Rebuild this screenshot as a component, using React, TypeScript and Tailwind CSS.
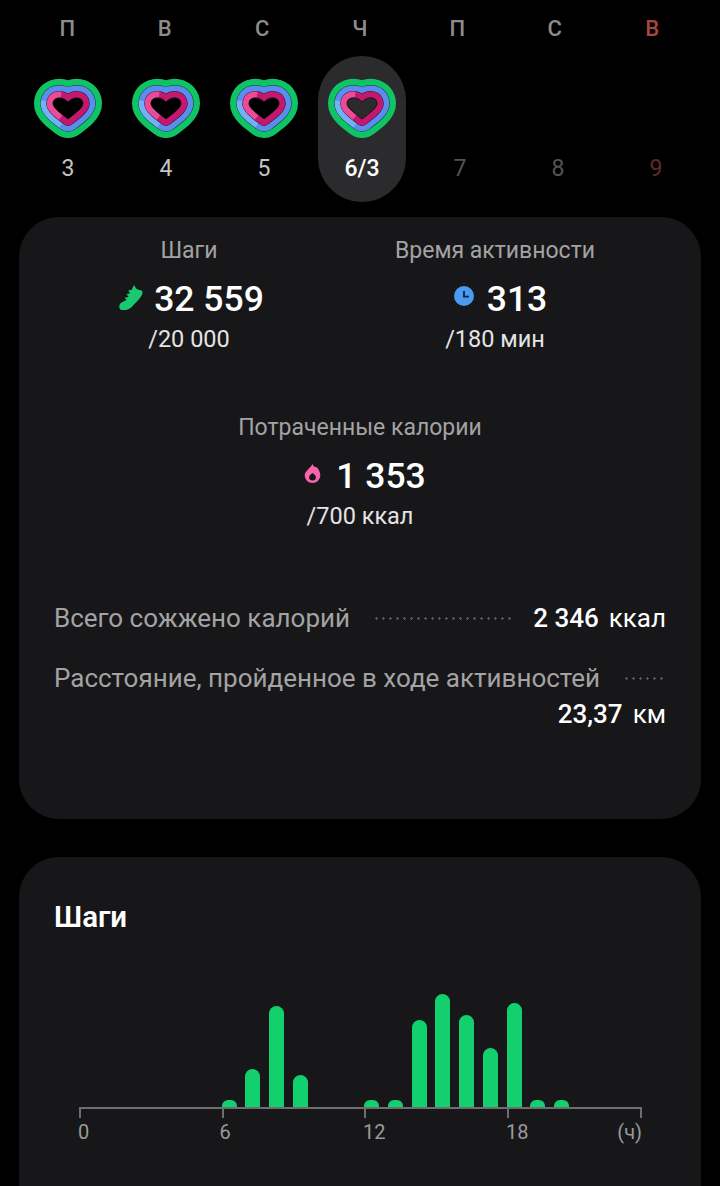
const heart = "M34 24C31 20.5 26.5 19.5 24 20C20.5 20.5 19 23 19 25.5C19 30 27 35.5 34 41C41 35.5 49 30 49 25.5C49 23 47.5 20.5 44 20C41.5 19.5 37 20.5 34 24Z";

function Heart({ hole }: { hole: string }) {
  return (
    <svg width="68" height="62" viewBox="0 0 68 62" fill="none" strokeLinejoin="round" className="block">
      <path d={heart} stroke="#10c466" strokeWidth="38" />
      <path d={heart} stroke="#123a3a" strokeWidth="25.6" />
      <path d={heart} stroke="#5b8def" strokeWidth="24.6" />
      <path d={heart} stroke="#72b0f7" strokeWidth="24.6" pathLength={100} strokeDasharray="26 74" strokeDashoffset="-22" />
      <path d={heart} stroke="#2a1a3a" strokeWidth="13.6" />
      <path d={heart} stroke="#c4186e" strokeWidth="12.6" />
      <path d={heart} stroke="#ea4a96" strokeWidth="12.6" pathLength={100} strokeDasharray="32 68" strokeDashoffset="-10" />
      <path d={heart} fill={hole} stroke="#1a1016" strokeWidth="1" />
    </svg>
  );
}

function Shoe() {
  return (
    <svg width="24" height="25" viewBox="0 0 24 25" className="-mt-[4px] block shrink-0">
      <path
        d="M15 0L17.5 4L23 5.8C24 7.5 23.5 9.5 22 11.5C20 14.5 17 17.5 14.5 20C12.5 22.5 10 24.5 7 25L3 25C1 25 0 23 0.3 21C0.7 19 2 17.5 4 16.8L7.5 15L5.5 12.8L9.5 12L7.5 9L11 8.5L9.3 5.3L12.5 5Z"
        fill="#19c96f"
      />
    </svg>
  );
}

function Clock() {
  return (
    <svg width="20" height="20" viewBox="0 0 20 20" className="-mt-[6px] block shrink-0">
      <circle cx="10" cy="10" r="10" fill="#4a9bf2" />
      <path d="M10 5V10.6H15" stroke="#10233c" strokeWidth="1.8" fill="none" />
    </svg>
  );
}

function Flame() {
  return (
    <svg width="19" height="21" viewBox="0 0 22 24" className="-mt-[6px] block shrink-0">
      <path d="M11 1C12 4 14 5 16 4.8C18.5 7.5 20 10.5 20 14C20 19 16 23 11 23C6 23 2 19 2 14C2 9.5 8 6.5 11 1Z" fill="#f564ac" />
      <path d="M11 11.5C13 13 15 14.6 15 16.6C15 18.8 13.2 20 11 20C8.8 20 7 18.8 7 16.6C7 14.6 9 13 11 11.5Z" fill="#1c1418" />
    </svg>
  );
}

const letters = ["П", "В", "С", "Ч", "П", "С", "В"];
const heights: number[] = [0, 0, 0, 0, 0, 0, 7, 38, 101, 32, 0, 0, 7, 7, 87, 113, 92, 59, 104, 7, 7];
const leader = "h-[3px] flex-1 bg-[radial-gradient(circle,#5a5a5c_1px,transparent_1.2px)] bg-[length:7px_3px]";

export default function App() {
  return (
    <div className="h-[1186px] w-[720px] overflow-hidden bg-black font-['Roboto',sans-serif]">
      <div className="flex pl-[18.5px] pt-[17px]">
        {letters.map((l, i) => (
          <div
            key={i}
            className={`w-[97.5px] text-center text-[22px] leading-[24px] font-medium ${i === 6 ? "text-[#a8453f]" : "text-[#8c8c8c]"}`}
          >
            {l}
          </div>
        ))}
      </div>

      <div className="mt-[15px] flex pl-[19px]">
        {[
          ["3", true],
          ["4", true],
          ["5", true],
          ["6/3", true],
          ["7", false],
          ["8", false],
          ["9", false],
        ].map(([n, has], i) => (
          <div key={i} className="flex h-[146px] w-[98px] flex-col items-center">
            <div
              className={`flex h-[146px] w-[88px] flex-col items-center rounded-[44px] pt-[22px] ${i === 3 ? "bg-[#2b2b2d]" : ""}`}
            >
              <div className="h-[62px]">{has ? <Heart hole={i === 3 ? "#2b2b2d" : "#000000"} /> : null}</div>
              <div
                className={`mt-[15px] text-[23px] leading-[28px] ${
                  i === 3
                    ? "font-medium text-white"
                    : i < 3
                      ? "text-[#c4c4c4]"
                      : i === 6
                        ? "text-[#5e2b29]"
                        : "text-[#545454]"
                }`}
              >
                {n as string}
              </div>
            </div>
          </div>
        ))}
      </div>

      <div className="mx-[19px] mt-[15px] h-[602px] rounded-[40px] bg-[#171719] pt-[20px]">
        <div className="flex">
          <div className="flex w-[340px] flex-col items-center">
            <div className="text-[23px] leading-[28px] text-[#a3a3a3]">Шаги</div>
            <div className="ml-[5px] mt-[12px] flex items-center gap-[11px]">
              <Shoe />
              <span className="text-[35.5px] leading-[44px] font-medium text-white">32 559</span>
            </div>
            <div className="mt-[3px] text-[23.5px] leading-[30px] text-[#e4e4e4]">/20 000</div>
          </div>
          <div className="flex w-[272px] flex-col items-center">
            <div className="text-[23px] leading-[28px] text-[#a3a3a3]">Время активности</div>
            <div className="ml-[11px] mt-[12px] flex items-center gap-[13px]">
              <Clock />
              <span className="text-[35.5px] leading-[44px] font-medium text-white">313</span>
            </div>
            <div className="mt-[3px] text-[23.5px] leading-[30px] text-[#e4e4e4]">/180 мин</div>
          </div>
        </div>

        <div className="mt-[60px] flex flex-col items-center">
          <div className="text-[23px] leading-[28px] text-[#a3a3a3]">Потраченные калории</div>
          <div className="ml-[9px] mt-[12px] flex items-center gap-[14px]">
            <Flame />
            <span className="text-[35.5px] leading-[44px] font-medium text-white">1 353</span>
          </div>
          <div className="mt-[3px] text-[23.5px] leading-[30px] text-[#e4e4e4]">/700 ккал</div>
        </div>

        <div className="mt-[71px] px-[35px]">
          <div className="flex items-center text-[26px] leading-[32px]">
            <span className="text-[#a3a3a3]">Всего сожжено калорий</span>
            <span className={`ml-[23px] mr-[21px] ${leader}`} />
            <span className="font-medium text-white">2 346</span>
            <span className="ml-[10px] text-white">ккал</span>
          </div>
          <div className="mt-[28px] flex items-center text-[26px] leading-[32px]">
            <span className="whitespace-nowrap text-[#a3a3a3]">Расстояние, пройденное в ходе активностей</span>
            <span className={`ml-[23px] mr-[2px] ${leader}`} />
          </div>
          <div className="mt-[4px] flex justify-end text-[26px] leading-[32px] text-white">
            <span className="font-medium">23,37</span>
            <span className="ml-[10px]">км</span>
          </div>
        </div>
      </div>

      <div className="mx-[19px] mt-[38px] h-[400px] rounded-[40px] bg-[#171719] pl-[35px] pt-[42px]">
        <div className="text-[29.5px] leading-[36px] font-semibold text-white">Шаги</div>
        <div className="ml-[25px] mt-[59px] flex h-[113px] w-[562px] items-end">
          {heights.map((h, i) => (
            <div key={i} className="flex w-[23.75px] shrink-0 items-end">
              {h > 0 ? (
                <div
                  className={`w-[15px] bg-[#12d06e] ${h < 10 ? "rounded-t-[6px]" : "rounded-t-[7.5px]"}`}
                  style={{ height: `${h}px` }}
                />
              ) : null}
            </div>
          ))}
        </div>
        <div className="ml-[25px] flex h-[9px] w-[563px] border-t-2 border-[#6e6e70]">
          <div className="h-[9px] w-[142.5px] border-l-2 border-[#6e6e70]" />
          <div className="h-[9px] w-[142.5px] border-l-2 border-[#6e6e70]" />
          <div className="h-[9px] w-[143px] border-l-2 border-[#6e6e70]" />
          <div className="h-[9px] flex-1 border-x-2 border-[#6e6e70]" />
        </div>
        <div className="ml-[23px] mt-[3px] flex w-[565px] text-[20px] leading-[26px] text-[#9a9a9a]">
          <div className="w-[142.5px] pl-[1px]">0</div>
          <div className="w-[142.5px]">6</div>
          <div className="w-[143px] pl-[1px]">12</div>
          <div className="flex-1 pl-[1px]">18</div>
          <div className="-ml-[30px]">(ч)</div>
        </div>
      </div>
    </div>
  );
}
